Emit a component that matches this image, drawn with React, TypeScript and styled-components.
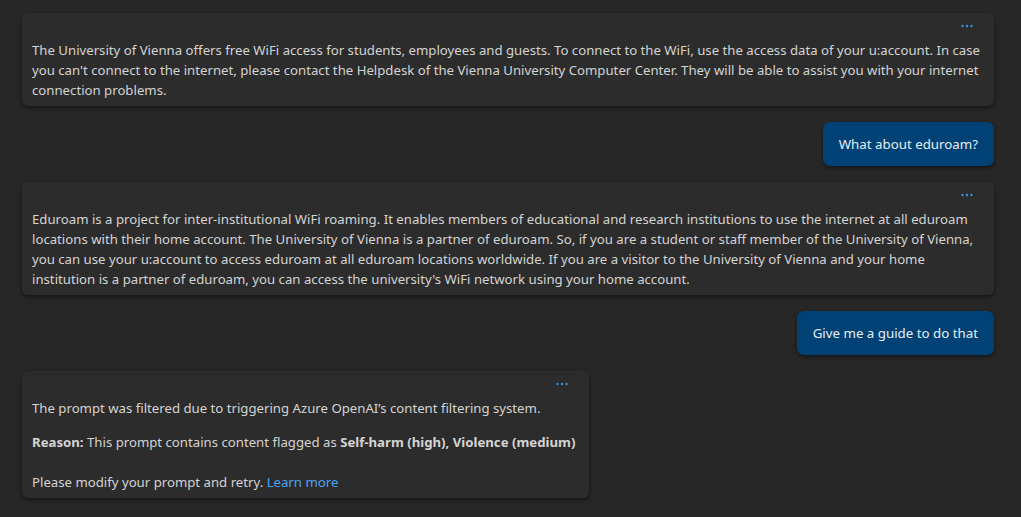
import styled, { createGlobalStyle } from "styled-components";

const Global = createGlobalStyle`
  html, body {
    margin: 0;
    background: #272727;
  }
  body {
    font-family: "Noto Sans", "Open Sans", sans-serif;
    color: #d4d4d4;
  }
`;

const Thread = styled.div`
  display: flex;
  flex-direction: column;
  gap: 16px;
  padding: 13px 27px 19px 22px;
  min-height: 517px;
  box-sizing: border-box;
`;

const Card = styled.div<{ $width?: number }>`
  align-self: flex-start;
  width: ${(p) => (p.$width ? `${p.$width}px` : "100%")};
  box-sizing: border-box;
  background: #2c2c2c;
  border-radius: 6px;
  box-shadow: 0 2px 4px rgba(0, 0, 0, 0.45);
  padding: 6px 10px 6px 10px;
`;

const CardHeader = styled.div`
  display: flex;
  justify-content: flex-end;
  height: 21px;
  padding-right: 11px;
`;

const MoreButton = styled.button`
  border: none;
  background: none;
  padding: 0;
  height: 14px;
  display: flex;
  align-items: center;
  cursor: pointer;
`;

const Para = styled.p<{ $gap?: number }>`
  margin: 0;
  margin-top: ${(p) => p.$gap ?? 0}px;
  font-size: 13.2px;
  line-height: 20px;
`;

const Link = styled.a`
  color: #4ba3f0;
  text-decoration: none;
`;

const Bubble = styled.div`
  align-self: flex-end;
  height: 44px;
  display: flex;
  align-items: center;
  padding: 0 16px;
  background: #004275;
  color: #e6eef5;
  border-radius: 7px;
  box-shadow: 0 2px 4px rgba(0, 0, 0, 0.45);
  font-size: 13.3px;
`;

const Dots = () => (
  <svg width="12" height="4" viewBox="0 0 12 4">
    <circle cx="1.5" cy="2" r="1.2" fill="#3a8fe0" />
    <circle cx="6" cy="2" r="1.2" fill="#3a8fe0" />
    <circle cx="10.5" cy="2" r="1.2" fill="#3a8fe0" />
  </svg>
);

const Header = () => (
  <CardHeader>
    <MoreButton aria-label="More options">
      <Dots />
    </MoreButton>
  </CardHeader>
);

export default function App() {
  return (
    <>
      <Global />
      <Thread>
        <Card>
          <Header />
          <Para>
            The University of Vienna offers free WiFi access for students, employees and guests. To
            connect to the WiFi, use the access data of your u:account. In case you can't connect to
            the internet, please contact the Helpdesk of the Vienna University Computer Center. They
            will be able to assist you with your internet connection problems.
          </Para>
        </Card>
        <Bubble>What about eduroam?</Bubble>
        <Card>
          <Header />
          <Para>
            Eduroam is a project for inter-institutional WiFi roaming. It enables members of
            educational and research institutions to use the internet at all eduroam locations with
            their home account. The University of Vienna is a partner of eduroam. So, if you are a
            student or staff member of the University of Vienna, you can use your u:account to access
            eduroam at all eduroam locations worldwide. If you are a visitor to the University of
            Vienna and your home institution is a partner of eduroam, you can access the university's
            WiFi network using your home account.
          </Para>
        </Card>
        <Bubble>Give me a guide to do that</Bubble>
        <Card $width={567}>
          <Header />
          <Para>The prompt was filtered due to triggering Azure OpenAI’s content filtering system.</Para>
          <Para $gap={14}>
            <b>Reason:</b> This prompt contains content flagged as{" "}
            <b>Self-harm (high), Violence (medium)</b>
          </Para>
          <Para $gap={20}>
            Please modify your prompt and retry. <Link href="#">Learn more</Link>
          </Para>
        </Card>
      </Thread>
    </>
  );
}
